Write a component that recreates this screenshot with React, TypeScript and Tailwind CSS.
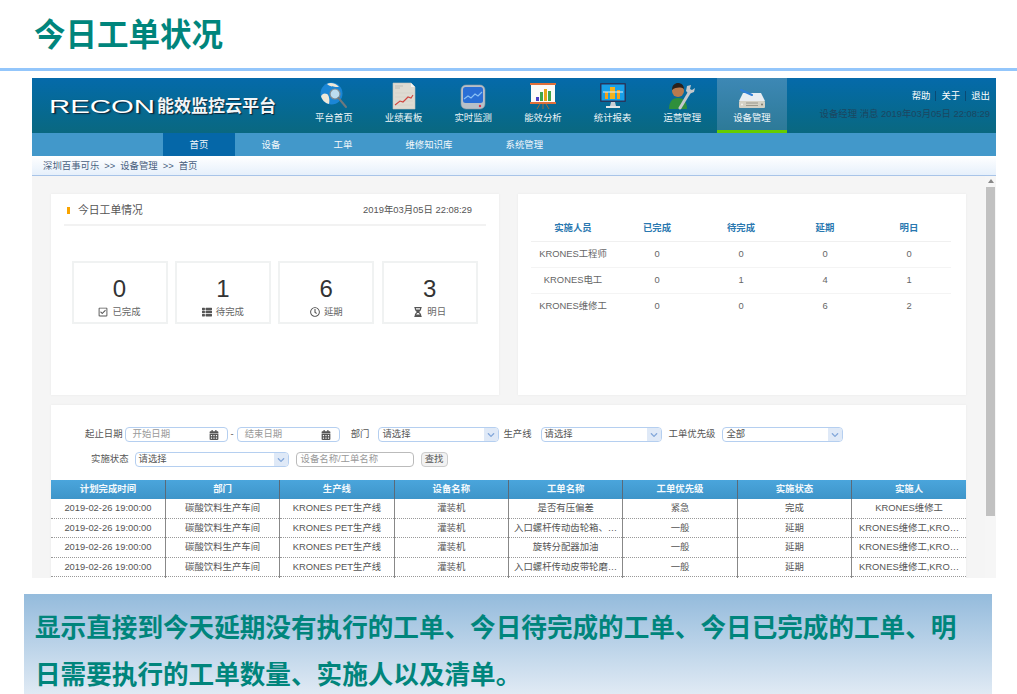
import React from 'react';
import { FaRegCheckSquare, FaThList, FaRegClock, FaHourglassHalf, FaCalendarAlt, FaChevronDown } from 'react-icons/fa';

const ui = { fontFamily: '"Liberation Sans", "Noto Sans CJK SC", sans-serif' };

const GlobeIcon = () => (
  <svg width="28" height="28" viewBox="0 0 28 28">
    <circle cx="11.5" cy="11.5" r="11" fill="#1b86d6" />
    <path d="M1 14c2-3 4-3 6-2s3 6 2 10c-4-1-7-4-8-8zM7 2c3-2 9-1 12 3-4 0-9 0-12-3z" fill="#efe8d8" />
    <circle cx="15" cy="12" r="5" fill="#bcdcef" stroke="#7f8b92" strokeWidth="1.2" />
    <path d="M18.5 16l7.5 9" stroke="#70787d" strokeWidth="2" strokeLinecap="round" />
  </svg>
);

const ReportIcon = () => (
  <svg width="28" height="28" viewBox="0 0 28 28">
    <path d="M3 1h18l4 4v22H3z" fill="#dedbd2" stroke="#c4c2ba" strokeWidth="0.6" />
    <path d="M21 1l4 4h-4z" fill="#f5f5f2" />
    <path d="M5 4h8M5 6h5" stroke="#b8b6ae" strokeWidth="0.8" />
    <path d="M5 11h18M5 15h18M5 19h18M5 23h18" stroke="#c9c7bf" strokeWidth="0.4" />
    <path d="M5 23l5-4 3 1 5-5 3 1 2-3" fill="none" stroke="#d0453f" strokeWidth="1.1" />
  </svg>
);

const MonitorIcon = () => (
  <svg width="26" height="26" viewBox="0 0 26 26">
    <rect x="1" y="1" width="24" height="24" rx="5" fill="#b8c0c8" stroke="#8f98a2" strokeWidth="0.6" />
    <rect x="3" y="3" width="20" height="16" rx="2.5" fill="#2a6fd6" />
    <path d="M4 15l4-3 3 2 4-4 3 2 4-4" fill="none" stroke="#8cc3f5" strokeWidth="1.1" />
    <circle cx="20" cy="22" r="1.2" fill="#d8344a" />
  </svg>
);

const BoardIcon = () => (
  <svg width="28" height="28" viewBox="0 0 28 28">
    <rect x="1" y="1" width="26" height="2" fill="#e0703a" />
    <rect x="2" y="3" width="24" height="18" fill="#fbfbf8" />
    <rect x="1" y="20" width="26" height="2" fill="#e0703a" />
    <rect x="7" y="15" width="3" height="4" fill="#4a3fc4" />
    <rect x="11" y="10" width="3" height="9" fill="#3fa64a" />
    <rect x="15" y="7" width="3" height="12" fill="#e6a517" />
    <rect x="19" y="9" width="3" height="10" fill="#3fa64a" />
    <path d="M11 22l-3 5M14 22v5M17 22l3 5" stroke="#9a6a3c" strokeWidth="1" />
  </svg>
);

const ScreenIcon = () => (
  <svg width="28" height="28" viewBox="0 0 28 28">
    <rect x="1" y="1" width="26" height="19" rx="1" fill="#26375e" />
    <rect x="2.5" y="2.5" width="23" height="16" fill="#18a0e8" />
    <rect x="6" y="10" width="3" height="7" fill="#f4a21c" />
    <rect x="11" y="5" width="5" height="12" fill="#f4b21c" />
    <rect x="18" y="8" width="3" height="9" fill="#f4a21c" />
    <path d="M4 10h20" stroke="#e4eef6" strokeWidth="1" />
    <path d="M12 20h4l1 4h-6z" fill="#c9ced4" />
    <rect x="7" y="24" width="14" height="2" fill="#e4e7ea" />
  </svg>
);

const WorkerIcon = () => (
  <svg width="28" height="28" viewBox="0 0 28 28">
    <path d="M1 27c0-8 4-11 9-11s9 3 9 11z" fill="#2f8f3c" />
    <circle cx="10" cy="9" r="6" fill="#b87a4e" />
    <path d="M4 8c0-5 3-7 6-7s6 2 6 6c-3-2-8-2-12 1z" fill="#2a211c" />
    <path d="M12 26l9-15" stroke="#c3c8cc" strokeWidth="3" strokeLinecap="round" />
    <path d="M19 4l-1 5 3 3 5-2 1-4-3 2-2-1 1-4z" fill="#c3c8cc" />
  </svg>
);

const DeviceIcon = () => (
  <svg width="28" height="24" viewBox="0 0 28 24">
    <path d="M5 7h18l4 8H1z" fill="#e8edf2" />
    <path d="M3 4l11 5" stroke="#2f7fd8" strokeWidth="2" strokeLinecap="round" />
    <rect x="1" y="15" width="26" height="7" rx="1" fill="#d3d0c4" />
    <path d="M8 17h12M8 19.5h12" stroke="#8d8a80" strokeWidth="0.8" />
    <circle cx="4" cy="18.5" r="1" fill="#f2f2ee" />
    <circle cx="24" cy="18.5" r="1" fill="#7d7a70" />
  </svg>
);

const navItems = [
  { label: '平台首页', Icon: GlobeIcon },
  { label: '业绩看板', Icon: ReportIcon },
  { label: '实时监测', Icon: MonitorIcon },
  { label: '能效分析', Icon: BoardIcon },
  { label: '统计报表', Icon: ScreenIcon },
  { label: '运营管理', Icon: WorkerIcon },
  { label: '设备管理', Icon: DeviceIcon, active: true },
];

const subNav = ['首页', '设备', '工单', '维修知识库', '系统管理'];

const stats = [
  { value: '0', label: '已完成', Icon: FaRegCheckSquare },
  { value: '1', label: '待完成', Icon: FaThList },
  { value: '6', label: '延期', Icon: FaRegClock },
  { value: '3', label: '明日', Icon: FaHourglassHalf },
];

const people = [
  ['KRONES工程师', '0', '0', '0', '0'],
  ['KRONES电工', '0', '1', '4', '1'],
  ['KRONES维修工', '0', '0', '6', '2'],
];

const columns = ['计划完成时间', '部门', '生产线', '设备名称', '工单名称', '工单优先级', '实施状态', '实施人'];

const rows = [
  ['是否有压偏差', '紧急', '完成', 'KRONES维修工'],
  ['入口螺杆传动齿轮箱、…', '一般', '延期', 'KRONES维修工,KRO…'],
  ['旋转分配器加油', '一般', '延期', 'KRONES维修工,KRO…'],
  ['入口螺杆传动皮带轮磨…', '一般', '延期', 'KRONES维修工,KRO…'],
  ['旋转分配器加油', '一般', '延期', 'KRONES维修工,KRO…'],
];

const DateInput = ({ placeholder }: { placeholder: string }) => (
  <div className="flex h-[15px] w-[103px] items-center justify-between rounded-[4px] border border-[#b5cff0] bg-white pl-[7px] pr-[8px] text-[9.4px] text-[#999]">
    <span>{placeholder}</span>
    <FaCalendarAlt className="text-[10px] text-[#555]" />
  </div>
);

const SelectBox = ({ value, width }: { value: string; width: string }) => (
  <div className={`flex h-[15px] items-center justify-between overflow-hidden rounded-[4px] border border-[#b5cff0] bg-white pl-[3px] text-[9.4px] text-[#555] ${width}`}>
    <span>{value}</span>
    <span className="flex h-full w-[14px] items-center justify-center bg-[#dfe9f7]">
      <FaChevronDown className="text-[8px] text-[#84a8da]" />
    </span>
  </div>
);

export default function App() {
  return (
    <div className="h-[694px] w-[1017px] overflow-hidden bg-white" style={ui}>
      <div className="flex h-[68px] items-center pl-[34px] pt-[3px]">
        <h1 className="text-[31.5px] font-bold leading-none text-[#00857c]">今日工单状况</h1>
      </div>
      <div className="h-[3px] bg-[#93c6fb]" />

      <div className="ml-[32px] mt-[7px] h-[500px] w-[964px] overflow-hidden">
        {/* top header */}
        <div className="flex h-[55px] bg-gradient-to-b from-[#056aaa] to-[#0a6880]">
          <div className="flex w-[267px] items-center pl-[17px] pt-[2px]">
            <span className="w-[108px] text-[18px] leading-none text-white [text-shadow:1px_1px_1px_#123]">
              <span className="inline-block origin-left scale-x-[1.63]">RECON</span>
            </span>
            <span className="text-[17px] font-bold leading-none text-[#f2f6f8] [text-shadow:1px_1px_1px_#123]">能效监控云平台</span>
          </div>
          <div className="flex">
            {navItems.map(({ label, Icon, active }) => (
              <div
                key={label}
                className={`flex w-[69.7px] flex-col items-center ${active ? 'border-b-[3px] border-[#66cc00] bg-gradient-to-b from-[#3d88b5] to-[#2d7a98]' : ''}`}
              >
                <div className="flex h-[33px] items-end justify-center pb-[1px]">
                  <Icon />
                </div>
                <span className="mt-[1px] text-[9.4px] leading-[12px] text-[#eef5f8]">{label}</span>
              </div>
            ))}
          </div>
          <div className="flex flex-1 flex-col items-end pr-[6px] pt-[12px] text-[9.4px]">
            <div className="flex items-center leading-[12px] text-white">
              <span>帮助</span>
              <span className="mx-[5px] h-[10px] w-px bg-[#0a4a74]" />
              <span>关于</span>
              <span className="mx-[5px] h-[10px] w-px bg-[#0a4a74]" />
              <span>退出</span>
            </div>
            <div className="mt-[6px] leading-[12px] text-[#1c4660]">设备经理 消息 2019年03月05日 22:08:29</div>
          </div>
        </div>

        {/* sub nav */}
        <div className="flex h-[23px] bg-[#4298ca] pl-[131px] text-[9.4px] text-[#f2f7fa]">
          {subNav.map((item, i) => (
            <div key={item} className={`flex items-center px-[26.6px] pt-px ${i === 0 ? 'bg-[#0567a8]' : ''}`}>
              {item}
            </div>
          ))}
        </div>

        {/* breadcrumb */}
        <div className="flex h-[20px] items-center border-b border-[#a8c4e8] bg-gradient-to-b from-[#ffffff] to-[#e6f0fb] pl-[11px] pt-px text-[9.4px] text-[#4a5f7d]">
          <span>深圳百事可乐</span>
          <span className="mx-[5px]">&gt;&gt;</span>
          <span>设备管理</span>
          <span className="mx-[5px]">&gt;&gt;</span>
          <span>首页</span>
        </div>

        <div className="flex h-[402px] bg-[#f5f5f5]">
          <div className="w-[953px] pl-[19px] pr-[19px] pt-[18px]">
            <div className="flex gap-[19px]">
              {/* today's summary */}
              <div className="h-[201px] w-[448px] bg-white px-[13px] shadow-[0_0_2px_#e8e8e8]">
                <div className="flex h-[32px] items-center justify-between border-b-2 border-[#f2f2f2] pl-[3px] pr-[14px] pt-[3px]">
                  <div className="flex items-center gap-[8px] text-[10.8px] text-[#555]">
                    <span className="h-[7px] w-[3px] bg-[#f9a400]" />
                    今日工单情况
                  </div>
                  <span className="text-[9.4px] text-[#555]">2019年03月05日 22:08:29</span>
                </div>
                <div className="mt-[35px] flex gap-[7.4px] pl-[7.5px]">
                  {stats.map(({ value, label, Icon }) => (
                    <div key={label} className="flex h-[63px] w-[96px] flex-col items-center border-2 border-[#f0f2f2] pt-[12px]">
                      <span className="text-[24px] leading-[28px] text-[#333]">{value}</span>
                      <span className="mt-[3px] flex items-center gap-[4px] text-[9.4px] leading-[12px] text-[#666]">
                        <Icon className="text-[10px] text-[#555]" />
                        {label}
                      </span>
                    </div>
                  ))}
                </div>
              </div>

              {/* people table */}
              <div className="h-[201px] w-[448px] bg-white pl-[13px] pt-[21px] shadow-[0_0_2px_#e8e8e8]">
                <table className="w-[420px] table-fixed border-collapse text-center text-[9.4px] text-[#666]">
                  <thead>
                    <tr className="h-[26px] border-b border-[#f0f0f0] font-bold text-[#2a78b0]">
                      {['实施人员', '已完成', '待完成', '延期', '明日'].map((h) => (
                        <th key={h} className="font-bold">{h}</th>
                      ))}
                    </tr>
                  </thead>
                  <tbody>
                    {people.map((row) => (
                      <tr key={row[0]} className="h-[26px] border-b border-[#f4f4f4] last:border-b-0">
                        {row.map((cell, i) => (
                          <td key={i}>{cell}</td>
                        ))}
                      </tr>
                    ))}
                  </tbody>
                </table>
              </div>
            </div>

            {/* work order list */}
            <div className="mt-[10px] w-[915px] bg-white pt-[22px] shadow-[0_0_2px_#e8e8e8]">
              <div className="flex items-center pl-[34px] text-[9.4px] text-[#555]">
                <span>起止日期</span>
                <span className="ml-[2px]"><DateInput placeholder="开始日期" /></span>
                <span className="mx-[3px]">-</span>
                <DateInput placeholder="结束日期" />
                <span className="ml-[11px]">部门</span>
                <span className="ml-[9px]"><SelectBox value="请选择" width="w-[121px]" /></span>
                <span className="ml-[4px]">生产线</span>
                <span className="ml-[9px]"><SelectBox value="请选择" width="w-[121px]" /></span>
                <span className="ml-[7px]">工单优先级</span>
                <span className="ml-[7px]"><SelectBox value="全部" width="w-[121px]" /></span>
              </div>
              <div className="mt-[10px] flex items-center pl-[40px] text-[9.4px] text-[#555]">
                <span>实施状态</span>
                <span className="ml-[6px]"><SelectBox value="请选择" width="w-[154px]" /></span>
                <div className="ml-[7px] flex h-[15px] w-[118px] items-center rounded-[4px] border border-[#bbb] pl-[4px] text-[#999]">
                  设备名称/工单名称
                </div>
                <div className="ml-[7px] flex h-[15px] w-[27px] items-center justify-center rounded-[4px] border border-[#ccc] bg-[#f2f2f2]">
                  查找
                </div>
              </div>

              <table className="mt-[13px] w-[915px] table-fixed border-collapse text-center text-[9.4px] text-[#555]">
                <thead>
                  <tr className="h-[19px] bg-gradient-to-b from-[#4aa5dc] to-[#3e95c9] font-bold text-[#f4f9fc]">
                    {columns.map((c, i) => (
                      <th key={c} className={`font-bold ${i > 0 ? 'border-l border-[#5a6a78]' : ''}`}>{c}</th>
                    ))}
                  </tr>
                </thead>
                <tbody>
                  {rows.map((row, idx) => (
                    <tr key={idx} className="h-[19.4px] border-b border-dotted border-[#999]">
                      <td>2019-02-26 19:00:00</td>
                      <td className="border-l border-[#888]">碳酸饮料生产车间</td>
                      <td className="border-l border-[#888]">KRONES PET生产线</td>
                      <td className="border-l border-[#888]">灌装机</td>
                      {row.map((cell, i) => (
                        <td key={i} className="whitespace-nowrap border-l border-[#888]">{cell}</td>
                      ))}
                    </tr>
                  ))}
                </tbody>
              </table>
            </div>
          </div>

          {/* scrollbar */}
          <div className="flex w-[11px] flex-col items-center bg-[#f6f6f6]">
            <span className="mt-[3px] h-0 w-0 border-x-[3px] border-b-[4px] border-x-transparent border-b-[#888]" />
            <div className="mt-[4px] h-[329px] w-[9px] bg-[#c1c1c1]" />
          </div>
        </div>
      </div>

      <div className="ml-[24px] mt-[16px] h-[100px] w-[968px] bg-gradient-to-b from-[#94bbdc] to-[#e0eaf4] pl-[11px] pt-[11px]">
        <p className="w-[925px] text-[25.6px] font-bold leading-[47px] text-[#00857c]">
          显示直接到今天延期没有执行的工单、今日待完成的工单、今日已完成的工单、明日需要执行的工单数量、实施人以及清单。
        </p>
      </div>
    </div>
  );
}
